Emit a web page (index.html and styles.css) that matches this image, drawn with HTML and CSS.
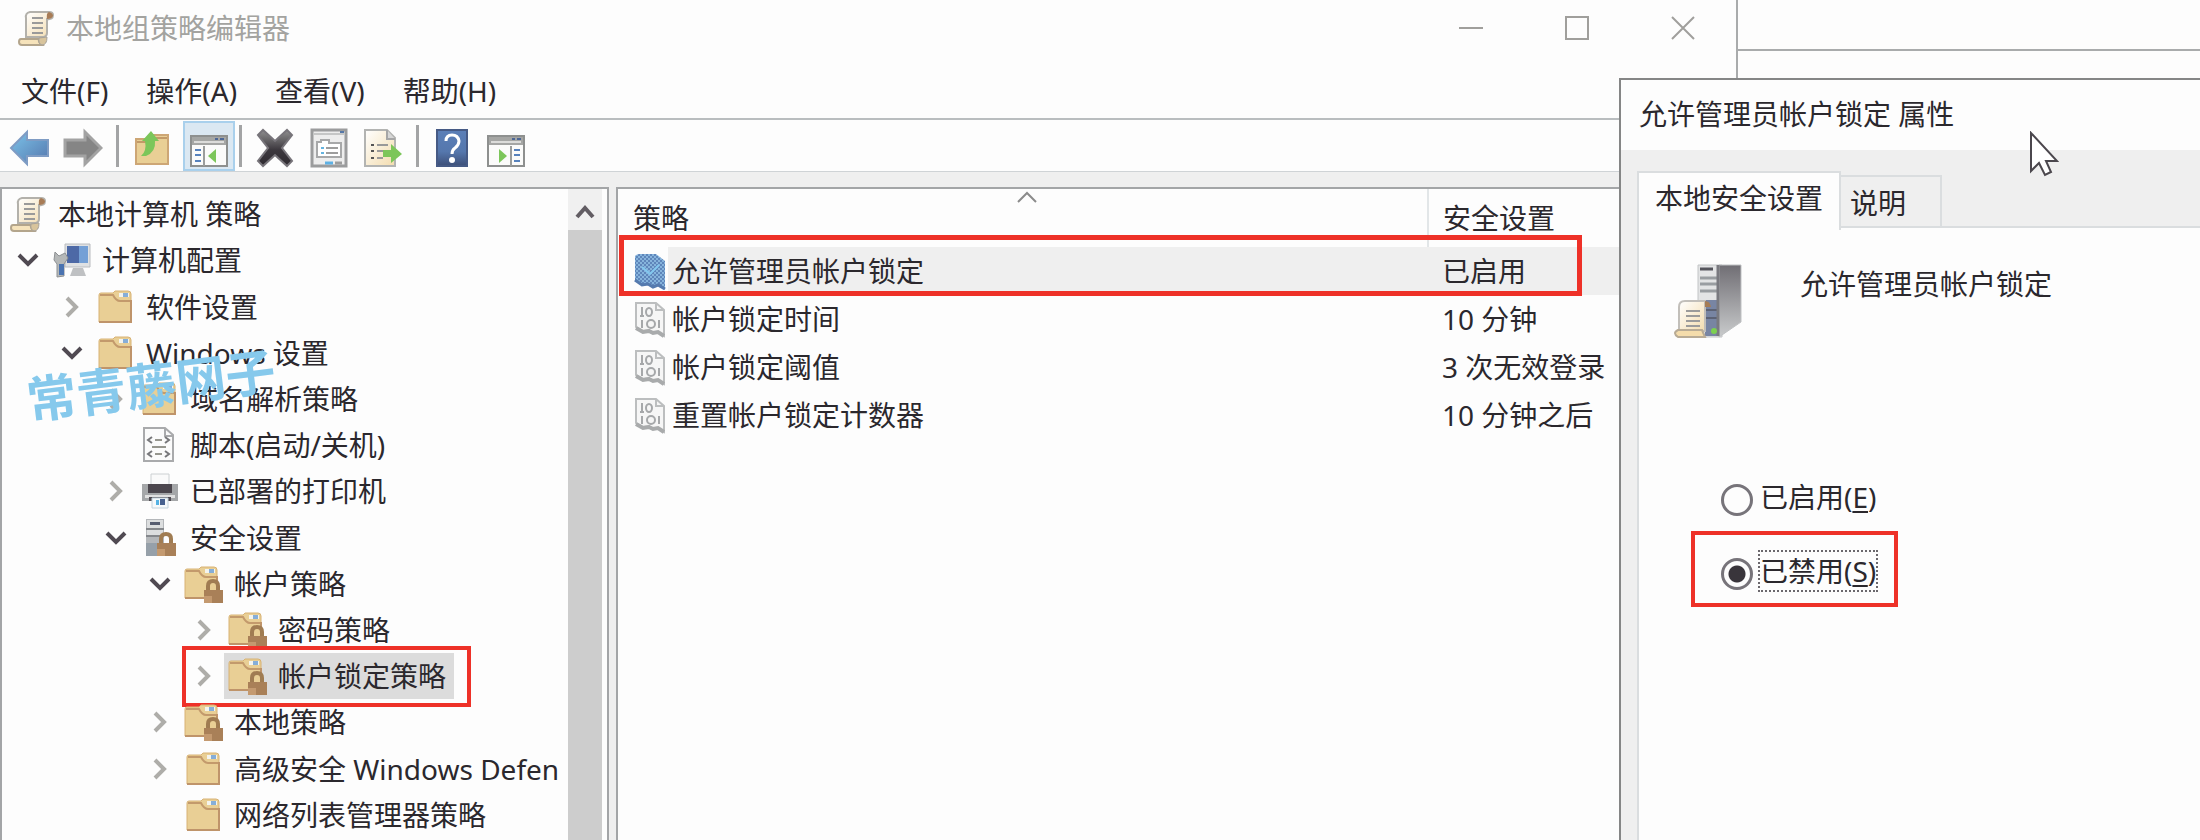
FILE: index.html
```html
<!DOCTYPE html>
<html lang="zh-CN">

<head>
    <meta charset="UTF-8">
    <meta name="viewport" content="width=device-width, initial-scale=1.0">
    <title>本地组策略编辑器</title>
    <link rel="stylesheet" href="styles.css">
</head>

<body>
    <!-- icon set -->
    <svg class="defs" width="0" height="0" aria-hidden="true">
        <defs>
            <linearGradient id="g-blue" x1="0" y1="0" x2="1" y2="1">
                <stop offset="0" stop-color="#7cc4ea"/><stop offset="1" stop-color="#5577ad"/>
            </linearGradient>
            <linearGradient id="g-paper" x1="0" y1="0" x2="1" y2="1">
                <stop offset="0" stop-color="#fff"/><stop offset="1" stop-color="#f3dcae"/>
            </linearGradient>
            <linearGradient id="g-dark" x1="0" y1="0" x2="0" y2="1">
                <stop offset="0" stop-color="#909090"/><stop offset="0.55" stop-color="#3c383e"/><stop offset="1" stop-color="#2e2a30"/>
            </linearGradient>
            <linearGradient id="g-help" x1="0" y1="0" x2="0" y2="1">
                <stop offset="0" stop-color="#5b7fb8"/><stop offset="0.6" stop-color="#5577ad"/><stop offset="1" stop-color="#3d4f78"/>
            </linearGradient>
            <linearGradient id="g-metal" x1="0" y1="0" x2="0" y2="1">
                <stop offset="0" stop-color="#706e74"/><stop offset="1" stop-color="#c9cbcc"/>
            </linearGradient>
            <symbol id="i-scroll" viewBox="0 0 40 40">
                <path d="M14 4q-5 1-4 6v19h18q3-1 3-4V11q6 1 6-4 0-3-4-3z" fill="url(#g-paper)" stroke="#b3b1ab" stroke-width="2"/>
                <path d="M33 4q-3 1-2 7 5 0 6-3 0-3-4-4z" fill="#a87c56"/>
                <path d="M5 31h18q-1 3 3 6H6q-3 0-3-3t2-3z" fill="#f6e3bb" stroke="#b3a58c" stroke-width="2"/>
                <path d="M23 30q-1 6 3 7 5 0 5-8z" fill="#d8c49c" stroke="#a7a29a" stroke-width="1"/>
                <path d="M16 10h11M16 15h11M16 20h11M16 25h11" stroke="#9a9a9a" stroke-width="2"/>
            </symbol>
            <symbol id="i-folder" viewBox="0 0 40 40">
                <path d="M3 8q0-2 2-2h12l2-2h13q3 0 3 3v28H3z" fill="#e9cf95" stroke="#d8b274" stroke-width="1"/>
                <path d="M4 8h13q3 6 7 6h10" fill="none" stroke="#c39a6c" stroke-width="2"/>
                <path d="M23 6h10v4h-10z" fill="#f4f4ee"/>
                <path d="M27 6h5v4h-5z" fill="#86aed8"/>
                <path d="M3 35h32V13" fill="none" stroke="#bf946a" stroke-width="2"/>
            </symbol>
            <symbol id="i-lock" viewBox="0 0 40 40">
                <path d="M24 28v-6q0-5 5-5t5 5v6" fill="none" stroke="#a07c52" stroke-width="4"/>
                <path d="M20 26h19v13H20z" fill="#a98058"/>
                <path d="M20 32h8v7h-8z" fill="#c49a70"/>
            </symbol>
            <symbol id="i-folder-lock" viewBox="0 0 40 40">
                <use href="#i-folder" x="-2" y="-1"/>
                <use href="#i-lock"/>
            </symbol>
            <symbol id="i-computer" viewBox="0 0 40 40">
                <path d="M13 4h25v23H13z" fill="#dfe1e3" stroke="#b9bcc0" stroke-width="1"/>
                <path d="M15 6h21v17H15z" fill="#4d69a6"/>
                <path d="M27 6h9v17h-9z" fill="#74a0d6"/>
                <path d="M21 28h10l3 8H18z" fill="#bfc1c3"/>
                <path d="M3 12l4 4 6-3 3 5-4 6v12l-7 1V24l-3-4z" fill="#b5b8b8" stroke="#8d9093" stroke-width="1"/>
                <path d="M7 24h5v11H7z" fill="#4a73b0"/>
            </symbol>
            <symbol id="i-script" viewBox="0 0 40 40">
                <path d="M4 3h21l8 7v26H4z" fill="#fbfbfb" stroke="#a9aaac" stroke-width="2"/>
                <path d="M25 3v8h8" fill="none" stroke="#a9aaac" stroke-width="2"/>
                <path d="M12 12l-4 3 4 3M25 12l4 3-4 3M12 26l-4 3 4 3M25 26l4 3-4 3" fill="none" stroke="#77777a" stroke-width="2"/>
                <path d="M15 15h7M12 22h14M15 29h7" stroke="#96968e" stroke-width="2"/>
            </symbol>
            <symbol id="i-printer" viewBox="0 0 40 40">
                <path d="M11 3h18v12H11z" fill="#fafafa" stroke="#ccd0d2" stroke-width="1"/>
                <path d="M2 13h36v17H2z" fill="#a5a7a9"/>
                <path d="M8 13h24v9H8z" fill="#4c474e"/>
                <path d="M5 24h30v3H5z" fill="#e1e1e1"/>
                <path d="M9 26h22v4H9z" fill="#514c53"/>
                <path d="M12 27h16v10H12z" fill="#f5f9fb" stroke="#c2d2dc" stroke-width="1"/>
                <path d="M16 29h3v5h-3z" fill="#53b1e3"/><path d="M20 28h5v6h-5z" fill="#47618f"/>
            </symbol>
            <symbol id="i-server-lock" viewBox="0 0 40 40">
                <path d="M6 1h18v37H6z" fill="#b4b7ba"/>
                <path d="M7 2h16v8H7zM7 12h16v5H7z" fill="#dcdedf"/>
                <path d="M10 4h10v3H10z" fill="#565d70"/>
                <path d="M6 11h18M6 18h18" stroke="#85888c" stroke-width="2"/>
                <path d="M6 25h18v13H6z" fill="#96a0a9"/>
                <use href="#i-lock" x="-3" y="-1"/>
            </symbol>
            <symbol id="i-policy" viewBox="0 0 32 38">
                <path d="M2 3h20l8 7v26l-6-4-5 1-4-3-6 1-7-4z" fill="#f6f6f6" stroke="#bcbebf" stroke-width="2"/>
                <path d="M22 3v7h8" fill="none" stroke="#bcbebf" stroke-width="2"/>
                <path d="M2 28l7 4 6-1 4 2 5-1 6 4" fill="none" stroke="#a9abac" stroke-width="4"/>
                <path d="M8 7v9M6 16h4M8 20v8M25 20v8" stroke="#a6a8aa" stroke-width="2"/>
                <ellipse cx="15" cy="12" rx="3" ry="4" fill="none" stroke="#a6a8aa" stroke-width="2"/>
                <ellipse cx="17" cy="24" rx="4" ry="4" fill="none" stroke="#a6a8aa" stroke-width="2"/>
            </symbol>
            <pattern id="p-dots" width="4" height="4" patternUnits="userSpaceOnUse">
                <path d="M0 0h4v4H0z" fill="#5f86bb"/><path d="M0 0h2v2H0zM2 2h2v2H2z" fill="#86b4dc"/>
            </pattern>
            <symbol id="i-policy-on" viewBox="0 0 32 38">
                <path d="M1 4q2-2 4-2h17l9 7v28l-7-4-5 2-5-3-6 1-7-5z" fill="url(#p-dots)"/>
                <path d="M8 15l8 7 9-9" fill="none" stroke="#83c8ef" stroke-width="2"/>
                <path d="M1 28l7 5 6-1 5 3 5-2 7 4" fill="none" stroke="#557aae" stroke-width="3"/>
            </symbol>
            <symbol id="i-open" viewBox="0 0 24 16">
                <path d="M3 3l9 9 9-9" fill="none" stroke="#504a52" stroke-width="4"/>
            </symbol>
            <symbol id="i-closed" viewBox="0 0 16 24">
                <path d="M3 3l9 9-9 9" fill="none" stroke="#aeada9" stroke-width="4"/>
            </symbol>
            <symbol id="i-pane" viewBox="0 0 38 32">
                <path d="M1 1h36v30H1z" fill="#fbfbfa" stroke="#8e908f" stroke-width="2"/>
                <path d="M2 2h34v8H2z" fill="#a5a6a4"/>
                <path d="M4 7h30" stroke="#dcdcda" stroke-width="2"/>
                <path d="M14 11v20" stroke="#9b9d9c" stroke-width="2"/>
                <path d="M5 15h6M5 20h6M5 26h6" stroke="#5782bd" stroke-width="2"/>
                <path d="M26 14v14l-8-7z" fill="#7cc65a"/>
            </symbol>
        </defs>
    </svg>

    <div class="desktop">
        <main class="app">
            <header class="title-bar">
                <svg class="icon"><use href="#i-scroll"/></svg>
                <h1>本地组策略编辑器</h1>
                <div class="window-buttons">
                    <button aria-label="最小化"><svg viewBox="0 0 24 24"><path d="M0 12h24"/></svg></button>
                    <button aria-label="最大化"><svg viewBox="0 0 24 24"><path d="M1 1h22v22H1z"/></svg></button>
                    <button aria-label="关闭"><svg viewBox="0 0 24 24"><path d="M1 1l22 22M23 1L1 23"/></svg></button>
                </div>
            </header>

            <nav class="menu">
                <button>文件(F)</button>
                <button>操作(A)</button>
                <button>查看(V)</button>
                <button>帮助(H)</button>
            </nav>

            <div class="toolbar">
                <button class="tool" aria-label="后退">
                    <svg viewBox="0 0 40 40"><path d="M2 20L18 4v8h21v16H18v8z" fill="url(#g-blue)" stroke="#7f9cc4" stroke-width="2"/></svg>
                </button>
                <button class="tool" aria-label="前进">
                    <svg viewBox="0 0 40 40"><path d="M38 20L22 4v8H2v16h20v8z" fill="#858585" stroke="#a3a3a3" stroke-width="3"/></svg>
                </button>
                <span class="sep"></span>
                <button class="tool" aria-label="向上">
                    <svg viewBox="0 0 40 40">
                        <path d="M4 11h14l3-4h15v29H4z" fill="#e9cf95" stroke="#cda675" stroke-width="2"/>
                        <path d="M5 14h12l5-4h13" fill="none" stroke="#c29a68" stroke-width="2"/>
                        <path d="M9 28q6-5 4-15h-3l9-10 8 10h-4q1 11-9 15z" fill="#7cc65a"/>
                    </svg>
                </button>
                <button class="tool pressed" aria-label="显示/隐藏控制台树">
                    <svg class="pane-icon" viewBox="0 0 38 32"><use href="#i-pane"/><path d="M25 4h3M30 4h4" stroke="#4d6796" stroke-width="2"/></svg>
                </button>
                <span class="sep"></span>
                <button class="tool" aria-label="删除">
                    <svg viewBox="0 0 40 40"><path d="M3 7l5-5 12 11L32 2l5 5-10 13 10 13-5 5-12-11L8 38l-5-5 10-13z" fill="url(#g-dark)" stroke="#77747a" stroke-width="2"/></svg>
                </button>
                <button class="tool" aria-label="属性">
                    <svg viewBox="0 0 40 40">
                        <path d="M3 2h34v36H3z" fill="#ededed" stroke="#9b9c9d" stroke-width="3"/>
                        <path d="M4 6h32" stroke="#c5c6c6" stroke-width="2"/>
                        <path d="M31 4h4" stroke="#5678a8" stroke-width="2"/>
                        <path d="M8 14h4v-2h8v3h12v14H8z" fill="#fff" stroke="#a7a8a9" stroke-width="2"/>
                        <path d="M17 20h12M17 25h12" stroke="#9d9d9d" stroke-width="2"/>
                        <path d="M12 20h3M12 25h3" stroke="#64b3df" stroke-width="2"/>
                        <path d="M16 35h8" stroke="#5eb1e4" stroke-width="3"/><path d="M26 35h7" stroke="#9d9d9d" stroke-width="3"/>
                    </svg>
                </button>
                <button class="tool" aria-label="导出列表">
                    <svg viewBox="0 0 40 40">
                        <path d="M2 2h22l8 8v28H2z" fill="url(#g-paper)" stroke="#b3b4b2" stroke-width="2"/>
                        <path d="M24 2v9h8" fill="#d6d6d6" stroke="#a6a6a6" stroke-width="2"/>
                        <path d="M8 17h3M8 23h3M8 30h3" stroke="#555" stroke-width="2"/>
                        <path d="M14 17h11M14 23h6M14 30h6" stroke="#999" stroke-width="2"/>
                        <path d="M20 22h8v-6l11 10-11 9v-6h-8z" fill="#7cc65a"/>
                    </svg>
                </button>
                <span class="sep"></span>
                <button class="tool" aria-label="帮助">
                    <svg viewBox="0 0 40 40">
                        <path d="M5 2h30v36H5z" fill="url(#g-help)" stroke="#465a85" stroke-width="2"/>
                        <path d="M14 13q0-6 6-6t7 6q0 4-4 7-3 2-3 6" fill="none" stroke="#fff" stroke-width="3"/>
                        <circle cx="20" cy="32" r="3" fill="#fff"/>
                    </svg>
                </button>
                <button class="tool" aria-label="显示/隐藏操作窗格">
                    <svg class="pane-icon" viewBox="0 0 38 32"><use href="#i-pane" transform="translate(38 0) scale(-1 1)"/><path d="M25 4h3M30 4h4" stroke="#4d6796" stroke-width="2"/></svg>
                </button>
            </div>

            <div class="panes">
                <section class="tree-pane">
                    <ul class="tree">
                        <li class="root"><span class="node"><svg class="icon"><use href="#i-scroll"/></svg>本地计算机 策略</span></li>
                        <li class="lv1">
                            <button class="toggle" aria-label="折叠"><svg class="open"><use href="#i-open"/></svg></button>
                            <span class="node"><svg class="icon"><use href="#i-computer"/></svg>计算机配置</span>
                        </li>
                        <li class="lv2">
                            <button class="toggle" aria-label="展开"><svg class="closed"><use href="#i-closed"/></svg></button>
                            <span class="node"><svg class="icon"><use href="#i-folder"/></svg>软件设置</span>
                        </li>
                        <li class="lv2">
                            <button class="toggle" aria-label="折叠"><svg class="open"><use href="#i-open"/></svg></button>
                            <span class="node"><svg class="icon"><use href="#i-folder"/></svg>Windows 设置</span>
                        </li>
                        <li class="lv3">
                            <button class="toggle" aria-label="展开"><svg class="closed"><use href="#i-closed"/></svg></button>
                            <span class="node"><svg class="icon"><use href="#i-folder"/></svg>域名解析策略</span>
                        </li>
                        <li class="lv3">
                            <span class="toggle"></span>
                            <span class="node"><svg class="icon"><use href="#i-script"/></svg>脚本(启动/关机)</span>
                        </li>
                        <li class="lv3">
                            <button class="toggle" aria-label="展开"><svg class="closed"><use href="#i-closed"/></svg></button>
                            <span class="node"><svg class="icon"><use href="#i-printer"/></svg>已部署的打印机</span>
                        </li>
                        <li class="lv3">
                            <button class="toggle" aria-label="折叠"><svg class="open"><use href="#i-open"/></svg></button>
                            <span class="node"><svg class="icon"><use href="#i-server-lock"/></svg>安全设置</span>
                        </li>
                        <li class="lv4">
                            <button class="toggle" aria-label="折叠"><svg class="open"><use href="#i-open"/></svg></button>
                            <span class="node"><svg class="icon"><use href="#i-folder-lock"/></svg>帐户策略</span>
                        </li>
                        <li class="lv5">
                            <button class="toggle" aria-label="展开"><svg class="closed"><use href="#i-closed"/></svg></button>
                            <span class="node"><svg class="icon"><use href="#i-folder-lock"/></svg>密码策略</span>
                        </li>
                        <li class="lv5">
                            <button class="toggle" aria-label="展开"><svg class="closed"><use href="#i-closed"/></svg></button>
                            <span class="node selected"><svg class="icon"><use href="#i-folder-lock"/></svg>帐户锁定策略</span>
                            <span class="mark mark-tree"></span>
                        </li>
                        <li class="lv4">
                            <button class="toggle" aria-label="展开"><svg class="closed"><use href="#i-closed"/></svg></button>
                            <span class="node"><svg class="icon"><use href="#i-folder-lock"/></svg>本地策略</span>
                        </li>
                        <li class="lv4">
                            <button class="toggle" aria-label="展开"><svg class="closed"><use href="#i-closed"/></svg></button>
                            <span class="node"><svg class="icon"><use href="#i-folder"/></svg>高级安全 Windows Defen</span>
                        </li>
                        <li class="lv4">
                            <span class="toggle"></span>
                            <span class="node"><svg class="icon"><use href="#i-folder"/></svg>网络列表管理器策略</span>
                        </li>
                    </ul>
                    <div class="scrollbar">
                        <button aria-label="向上滚动"><svg viewBox="0 0 20 16"><path d="M2 14l8-9 8 9" fill="none" stroke="#625d63" stroke-width="4"/></svg></button>
                        <div class="thumb"></div>
                    </div>
                    <div class="watermark">常青藤网子</div>
                </section>

                <section class="list-pane">
                    <svg class="sort" viewBox="0 0 20 12"><path d="M1 11l9-9 9 9" fill="none" stroke="#8b8b8b" stroke-width="2"/></svg>
                    <table>
                        <colgroup>
                            <col class="w-icon">
                            <col>
                            <col class="w-setting">
                        </colgroup>
                        <thead>
                            <tr>
                                <th colspan="2" class="col-name">策略</th>
                                <th class="col-setting">安全设置</th>
                            </tr>
                        </thead>
                        <tbody>
                            <tr class="current">
                                <td class="col-icon"><svg class="policy"><use href="#i-policy-on"/></svg></td>
                                <td>允许管理员帐户锁定</td>
                                <td class="col-setting">已启用</td>
                            </tr>
                            <tr>
                                <td class="col-icon"><svg class="policy"><use href="#i-policy"/></svg></td>
                                <td>帐户锁定时间</td>
                                <td class="col-setting">10 分钟</td>
                            </tr>
                            <tr>
                                <td class="col-icon"><svg class="policy"><use href="#i-policy"/></svg></td>
                                <td>帐户锁定阈值</td>
                                <td class="col-setting">3 次无效登录</td>
                            </tr>
                            <tr>
                                <td class="col-icon"><svg class="policy"><use href="#i-policy"/></svg></td>
                                <td>重置帐户锁定计数器</td>
                                <td class="col-setting">10 分钟之后</td>
                            </tr>
                        </tbody>
                    </table>
                    <span class="mark mark-row"></span>
                </section>
            </div>
        </main>

        <aside class="behind"></aside>

        <section class="dialog">
            <h2>允许管理员帐户锁定 属性</h2>
            <div class="dialog-body">
                <div class="tabs">
                    <button class="tab active">本地安全设置</button>
                    <button class="tab">说明</button>
                </div>
                <div class="tab-page">
                    <div class="policy-head">
                        <svg class="server" viewBox="0 0 68 74">
                            <path d="M24 1h24v72H24z" fill="#e3e4e5" stroke="#c2c4c6" stroke-width="1"/>
                            <path d="M26 5h13" stroke="#55555c" stroke-width="3"/>
                            <path d="M26 14h17M26 20h17M26 27h17" stroke="#999da1" stroke-width="3"/>
                            <path d="M31 36h14v36H31z" fill="#7885a3"/>
                            <path d="M32 46h12M32 54h12" stroke="#5c6275" stroke-width="2"/>
                            <path d="M45 1h22v57L45 73z" fill="url(#g-metal)" stroke="#bfc1c3" stroke-width="1"/>
                            <path d="M44 1v71" stroke="#79797f" stroke-width="3"/>
                            <path d="M11 37q-6 0-6 6v24h26V37z" fill="url(#g-paper)" stroke="#c2bfba" stroke-width="2"/>
                            <path d="M31 37q5 0 6 6h-6z" fill="#a67d56"/>
                            <path d="M12 47h14M12 52h14M12 57h14M12 62h14" stroke="#9b9b9b" stroke-width="2"/>
                            <path d="M4 66h24l3 7H4q-6-4 0-7z" fill="#f4dcab" stroke="#b8ab95" stroke-width="2"/>
                            <circle cx="40" cy="67" r="3" fill="#7cd04f"/>
                        </svg>
                        <span>允许管理员帐户锁定</span>
                    </div>
                    <div class="options">
                        <div class="option">
                            <input type="radio" name="state" id="enabled">
                            <label for="enabled">已启用(<u>E</u>)</label>
                        </div>
                        <div class="option">
                            <input type="radio" name="state" id="disabled" checked>
                            <label for="disabled" class="focused">已禁用(<u>S</u>)</label>
                            <span class="mark mark-option"></span>
                        </div>
                    </div>
                </div>
            </div>
            <svg class="pointer" viewBox="0 0 30 46"><path d="M2 2v38l8-8 6 12 6-3-5-11h11z" fill="#fff" stroke="#4b474d" stroke-width="2"/></svg>
        </section>
    </div>
</body>

</html>
```
FILE: styles.css
```css
* {
    box-sizing: border-box;
}

body {
    margin: 0;
    background: #fdfdfd;
    color: #2b282d;
    font-family: "Noto Sans", "Noto Sans CJK SC", sans-serif;
    font-size: 28px;
    line-height: 40px;
    overflow: hidden;
}

h1,
h2 {
    margin: 0;
    font-size: 28px;
    font-weight: 400;
}

button {
    padding: 0;
    border: 0;
    background: none;
    color: inherit;
    font: inherit;
}

svg {
    display: block;
    flex: none;
}

.defs {
    position: absolute;
}

.icon {
    width: 40px;
    height: 40px;
}

.desktop {
    position: relative;
    display: flex;
    min-height: 100vh;
}

.app {
    flex: 1;
    min-width: 0;
    display: flex;
    flex-direction: column;
    border-right: 2px solid #a9abac;
}

.behind {
    width: 462px;
    height: 51px;
    border-bottom: 2px solid #a9abac;
}

/* red call-out frames */
.mark {
    position: absolute;
    border: 4px solid #ee3128;
    pointer-events: none;
}

/* title bar and menu */
.title-bar {
    display: flex;
    align-items: center;
    height: 56px;
    padding-left: 16px;
    color: #a3a3a0;
}

.title-bar h1 {
    flex: 1;
    padding-left: 10px;
}

.window-buttons {
    display: flex;
}

.window-buttons button {
    display: flex;
    justify-content: center;
    width: 106px;
}

.window-buttons svg {
    width: 24px;
    height: 24px;
    fill: none;
    stroke: #a09f9c;
    stroke-width: 2;
}

.menu {
    display: flex;
    gap: 38px;
    height: 64px;
    padding: 8px 21px 0;
    border-bottom: 2px solid #b9bdbf;
}

/* toolbar */
.toolbar {
    display: flex;
    align-items: center;
    gap: 12px;
    height: 52px;
    padding-left: 8px;
    border-bottom: 1px solid #cfd3d6;
}

.tool {
    display: flex;
    align-items: center;
    justify-content: center;
    width: 42px;
    height: 50px;
}

.tool svg {
    width: 40px;
    height: 40px;
    margin-top: 4px;
}

.tool .pane-icon {
    width: 38px;
    height: 32px;
    margin-top: 10px;
}

.pressed {
    width: 52px;
    margin: 0 -8px 0 -2px;
    background: #dbe8f2;
    border: 2px solid #a9d0ec;
}

.sep {
    width: 3px;
    height: 42px;
    background: #a3a4a5;
}

/* panes */
.panes {
    flex: 1;
    display: flex;
    gap: 7px;
    padding-top: 15px;
    background: #efefef;
}

.tree-pane {
    position: relative;
    display: flex;
    width: 609px;
    padding-right: 5px;
    border: 2px solid #a3a5a7;
    border-bottom: 0;
    background: #fdfdfd;
}

.tree {
    flex: 1;
    min-width: 0;
    display: grid;
    grid-auto-rows: minmax(46px, 1fr);
    margin: 0;
    padding: 2px 0;
    list-style: none;
    overflow: hidden;
}

.tree li {
    position: relative;
    display: flex;
    align-items: stretch;
    padding-left: 6px;
    white-space: nowrap;
}

.tree .lv2 {
    padding-left: 50px;
}

.tree .lv3 {
    padding-left: 94px;
}

.tree .lv4 {
    padding-left: 138px;
}

.tree .lv5 {
    padding-left: 182px;
}

.toggle {
    display: flex;
    flex: none;
    align-items: center;
    justify-content: center;
    width: 40px;
}

.open {
    width: 24px;
    height: 16px;
}

.closed {
    width: 16px;
    height: 24px;
}

.node {
    display: flex;
    align-items: center;
    gap: 10px;
    padding: 0 8px 0 4px;
}

.root .node {
    padding-left: 0;
}

.selected {
    background: #dcdcdc;
}

.mark-tree {
    top: -7px;
    left: 180px;
    width: 289px;
    height: 61px;
}

.scrollbar {
    display: flex;
    flex-direction: column;
    width: 34px;
    padding-top: 3px;
    background: #f0f0f0;
}

.scrollbar button {
    display: flex;
    align-items: center;
    justify-content: center;
    height: 38px;
}

.scrollbar svg {
    width: 20px;
    height: 16px;
}

.thumb {
    flex: 1;
    background: #cdcdcd;
}

.watermark {
    position: absolute;
    top: 176px;
    left: 24px;
    color: #86c9ec;
    font-size: 50px;
    font-weight: 700;
    transform: rotate(-7deg);
}

/* policy list */
.list-pane {
    position: relative;
    flex: 1;
    border: 2px solid #a3a5a7;
    border-right: 0;
    border-bottom: 0;
    background: #fdfdfd;
}

.list-pane table {
    width: 100%;
    border-collapse: collapse;
    table-layout: fixed;
}

.w-icon {
    width: 50px;
}

.w-setting {
    width: 308px;
}

.list-pane th {
    height: 58px;
    padding: 0 0 0 15px;
    font-weight: 400;
    text-align: left;
}

.list-pane td {
    height: 48px;
    padding: 0 0 0 4px;
}

.list-pane .col-name {
    border-right: 2px solid #e2e6e8;
}

.list-pane .col-setting {
    padding-left: 14px;
}

.list-pane .col-icon {
    padding-left: 16px;
}

.current td:not(.col-icon) {
    background: #efefef;
}

.policy {
    width: 32px;
    height: 38px;
}

.sort {
    position: absolute;
    top: 2px;
    left: 399px;
    width: 20px;
    height: 12px;
}

.mark-row {
    top: 46px;
    left: 1px;
    right: 154px;
    height: 61px;
    border-width: 5px;
}

/* properties dialog */
.dialog {
    position: absolute;
    top: 78px;
    right: 0;
    bottom: 0;
    display: flex;
    flex-direction: column;
    width: 581px;
    border: 2px solid #858686;
    border-right: 0;
    border-bottom: 0;
    background: #fdfdfd;
}

.dialog h2 {
    height: 70px;
    padding: 14px 0 0 18px;
}

.dialog-body {
    flex: 1;
    display: flex;
    flex-direction: column;
    padding: 21px 0 0 16px;
    background: #efefef;
}

.tabs {
    display: flex;
    align-items: flex-end;
    height: 57px;
}

.tab {
    height: 53px;
    padding: 2px 34px 0 9px;
    border: 2px solid #dadddf;
    border-left: 0;
}

.tab.active {
    position: relative;
    height: 59px;
    margin-bottom: -2px;
    padding: 0 16px 8px;
    border-left: 2px solid #dadddf;
    border-bottom: 0;
    background: #fdfdfd;
}

.tab-page {
    flex: 1;
    border: 2px solid #dadddf;
    border-width: 2px 0 0 2px;
    margin-top: -2px;
    background: #fdfdfd;
}

.policy-head {
    display: flex;
    gap: 58px;
    padding: 36px 0 0 35px;
}

.server {
    width: 68px;
    height: 74px;
}

.options {
    display: flex;
    flex-direction: column;
    gap: 32px;
    padding: 138px 0 0 82px;
}

.option {
    position: relative;
    display: flex;
    align-items: center;
    gap: 5px;
}

.option input {
    appearance: none;
    width: 32px;
    height: 32px;
    margin: 6px 0 0;
    border: 3px solid #77747a;
    border-radius: 50%;
    background: #fdfdfd;
}

.option input:checked {
    background: radial-gradient(circle, #39353b 8px, #fdfdfd 9px);
}

.option label {
    border: 2px dotted transparent;
    line-height: 38px;
}

.option .focused {
    border-color: #6b686d;
}

.option u {
    text-underline-offset: 3px;
}

.mark-option {
    top: -19px;
    left: -30px;
    width: 207px;
    height: 76px;
}

.pointer {
    position: absolute;
    top: 51px;
    right: 141px;
    width: 30px;
    height: 46px;
}
```
